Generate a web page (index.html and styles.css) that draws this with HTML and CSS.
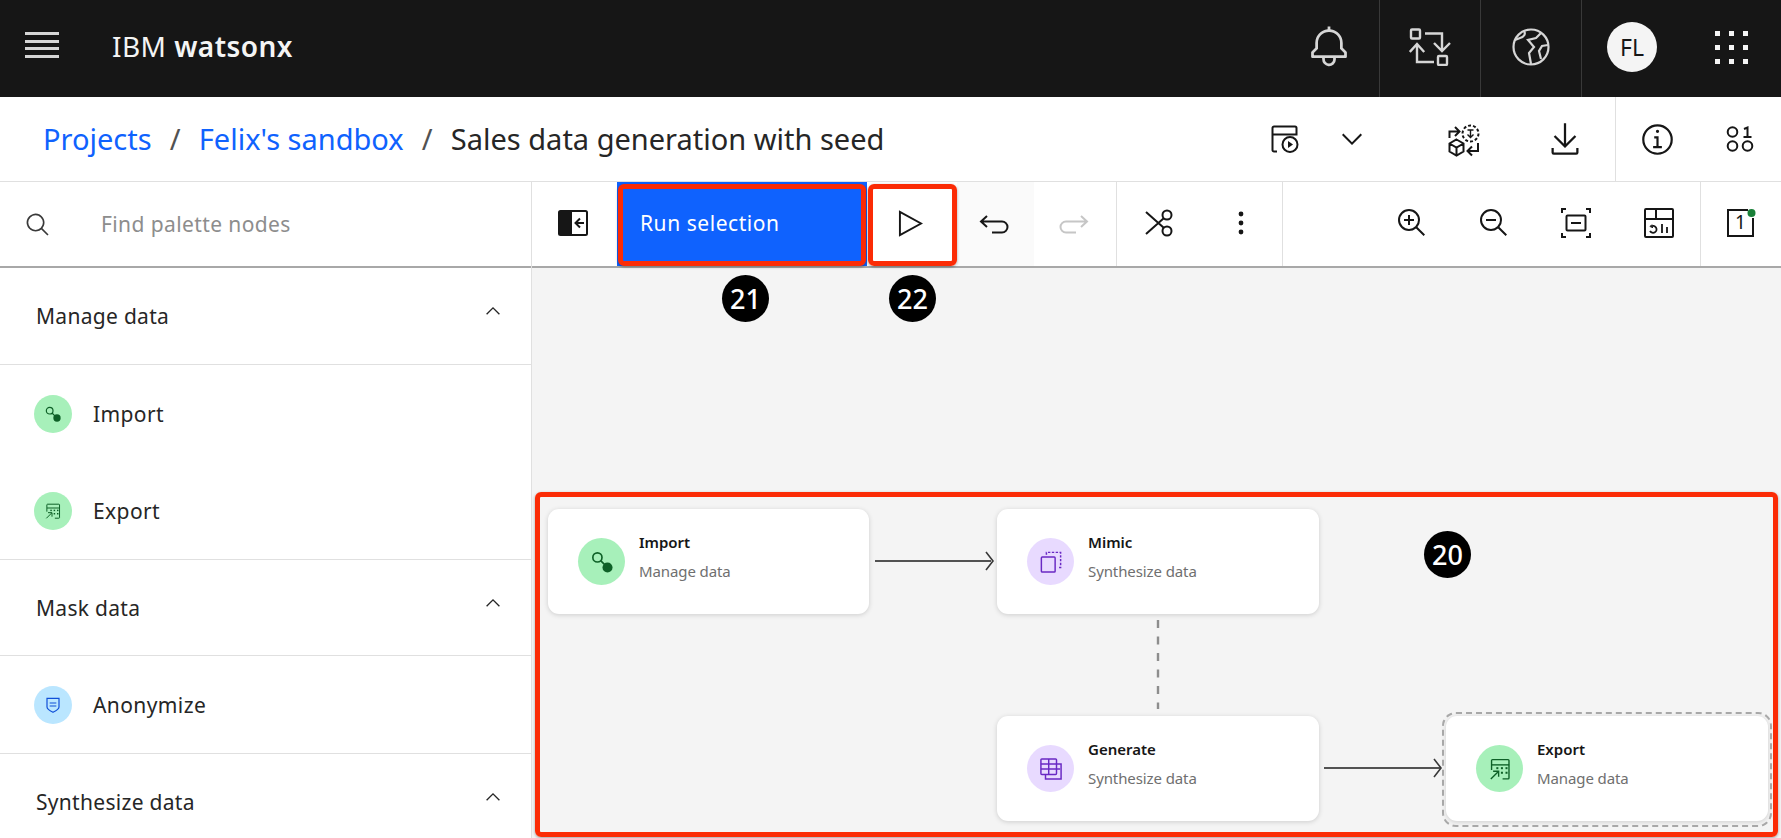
FILE: index.html
```html
<!DOCTYPE html>
<html lang="en">
<head>
<meta charset="utf-8">
<title>IBM watsonx</title>
<link rel="stylesheet" href="styles.css">
</head>
<body>
<svg class="defs" width="0" height="0" aria-hidden="true">
  <symbol id="n-import" viewBox="0 0 24 24"><circle cx="7" cy="7" r="5" fill="none" stroke="currentColor" stroke-width="1.8"/><path d="M10.5 10.5l5 5" fill="none" stroke="currentColor" stroke-width="1.8"/><circle cx="18" cy="18" r="5.5" fill="currentColor"/></symbol>
  <symbol id="n-export" viewBox="0 0 24 24"><g fill="none" stroke="currentColor" stroke-width="1.5"><path d="M2.8 13V2.8a1 1 0 0 1 1-1h17a1 1 0 0 1 1 1v19a1 1 0 0 1-1 1h-6"/><path d="M3 7.5h19"/><path d="M2 23l8-8M4.5 14.5H10.5V20.5"/></g><g fill="currentColor"><rect x="8" y="10" width="2.2" height="2.2"/><rect x="13" y="10" width="2.2" height="2.2"/><rect x="18" y="10" width="2.2" height="2.2"/><rect x="13" y="15" width="2.2" height="2.2"/><rect x="18" y="15" width="2.2" height="2.2"/></g></symbol>
  <symbol id="n-mimic" viewBox="0 0 24 24"><g fill="none" stroke="currentColor" stroke-width="1.6"><rect x="1.5" y="6.500" width="15" height="16.500" rx="1"/><path d="M7 4V1.500h15.500v16.500h-3" stroke-dasharray="2.6 1.6"/></g></symbol>
  <symbol id="n-generate" viewBox="0 0 24 24"><g fill="none" stroke="currentColor" stroke-width="1.6"><rect x="1" y="1" width="17" height="17" rx="1"/><path d="M1 6.5h17M1 12h21M9.5 1v17"/><path d="M18 6.5h5v16.5H6v-5"/></g></symbol>
  <symbol id="n-anon" viewBox="0 0 24 24"><path d="M3 2h18v13c0 3-5 6-9 8-4-2-9-5-9-8z" fill="none" stroke="currentColor" stroke-width="1.8"/><path d="M7 9h10M7 13.500h10" stroke="currentColor" stroke-width="1.8"/></symbol>
</svg>

<div class="app">
  <header class="topbar">
    <button class="hamburger" aria-label="Menu"><span></span><span></span><span></span><span></span></button>
    <div class="brand">IBM <b>watsonx</b></div>
    <div class="top-actions">
      <div class="top-cell">
        <svg width="44" height="44" viewBox="0 0 32 32" fill="currentColor"><path d="M28.7071,19.293,26,16.5859V13a10.0136,10.0136,0,0,0-9-9.9492V1H15V3.0508A10.0136,10.0136,0,0,0,6,13v3.5859L3.2929,19.293A1,1,0,0,0,3,20v3a1,1,0,0,0,1,1h7v.7768a5.152,5.152,0,0,0,4.5,5.1987A5.0057,5.0057,0,0,0,21,25V24h7a1,1,0,0,0,1-1V20A1,1,0,0,0,28.7071,19.293ZM19,25a3,3,0,0,1-6,0V24h6Zm8-3H5V20.4141L7.707,17.707A1,1,0,0,0,8,17V13a8,8,0,0,1,16,0v4a1,1,0,0,0,.293.707L27,20.4141Z"/></svg>
      </div>
      <div class="top-cell sep">
        <svg width="42" height="38" viewBox="0 0 42 38" fill="none" stroke="currentColor" stroke-width="2.4"><rect x="2" y="1.500" width="9" height="9" rx="1"/><path d="M16 5.500H33V23M25 15l8 8 8-8"/><path d="M8 16V34H25M.8 24L8 16l7.200 8"/><rect x="29" y="28" width="9" height="9" rx="1"/></svg>
      </div>
      <div class="top-cell sep">
        <svg width="38" height="38" viewBox="0 0 38 38" fill="none" stroke="currentColor" stroke-width="2.200"><circle cx="19" cy="19" r="17.500"/><path d="M12 3c2 3 0 6-4 7l-5 2"/><path d="M29 5l-5 5-8 2 6 7-5 6 2 11"/><path d="M36 17l-6 1-3 5 2 8"/></svg>
      </div>
      <div class="top-cell sep avatar-cell"><div class="avatar">FL</div></div>
      <div class="top-cell grid-cell">
        <div class="grid-icon"><i></i><i></i><i></i><i></i><i></i><i></i><i></i><i></i><i></i></div>
      </div>
    </div>
  </header>

  <div class="subbar">
    <nav class="crumbs">
      <a class="crumb-link">Projects</a><span class="slash">/</span><a class="crumb-link">Felix's sandbox</a><span class="slash">/</span><span class="crumb-cur">Sales data generation with seed</span>
    </nav>
    <div class="sub-actions">
      <div class="sub-btn w66">
        <svg width="28" height="28" viewBox="0 0 28 28" fill="none" stroke="currentColor" stroke-width="2"><path d="M6 26.500H3a1.500 1.500 0 0 1-1.500-1.500V3A1.500 1.500 0 0 1 3 1.500h21A1.500 1.500 0 0 1 25.500 3v6.500H1.500"/><circle cx="19" cy="19.500" r="7.500"/><path d="M17 16v7l5-3.500z" fill="currentColor" stroke="none"/></svg>
      </div>
      <div class="sub-btn w67">
        <svg width="32" height="32" viewBox="0 0 32 32" fill="currentColor"><path d="M16 22 6 12 7.400 10.600 16 19.200 24.600 10.600 26 12z"/></svg>
      </div>
      <div class="sub-btn w101 ml28 nudge-down">
        <svg width="34" height="34" viewBox="0 0 34 34" fill="none" stroke="currentColor" stroke-width="2"><path d="M2.500 14V7.500H12M8 3l4.500 4.500L8 12"/><circle cx="23.500" cy="9.500" r="8" stroke-dasharray="3 2"/><path d="M23.500 6v7M20.500 10.500l3 3 3-3M20.500 6h6" stroke-width="1.400"/><path d="M9.500 15.500l7 4v8l-7 4-7-4v-8zM2.500 19.500l7 4 7-4M9.500 23.500v8"/><path d="M31 19v8H20.500M25 22.500L20.500 27l4.500 4.500"/></svg>
      </div>
      <div class="sub-btn w101">
        <svg width="36" height="36" viewBox="0 0 32 32" fill="currentColor"><path d="M26 24v4H6v-4H4v4a2 2 0 002 2h20a2 2 0 002-2v-4zM26 14l-1.410-1.410L17 20.170V2h-2v18.170l-7.590-7.580L6 14l10 10 10-10z"/></svg>
      </div>
      <div class="sub-btn w84 border-l">
        <svg width="35" height="35" viewBox="0 0 32 32" fill="currentColor"><path d="M17 22v-9h-4v2h2v7h-3v2h8v-2h-3zM16 7a1.500 1.500 0 101.500 1.500A1.500 1.500 0 0016 7z"/><path d="M16 30a14 14 0 1114-14A14 14 0 0116 30zm0-26a12 12 0 1012 12A12 12 0 0016 4z"/></svg>
      </div>
      <div class="sub-btn w82">
        <svg width="28" height="26" viewBox="0 0 28 26" fill="none" stroke="currentColor" stroke-width="2"><circle cx="6.500" cy="6" r="4.800"/><circle cx="6.500" cy="20" r="4.800"/><circle cx="21.500" cy="20" r="4.800"/><path d="M18 3l3.500-1.500V11M17.500 11h8"/></svg>
      </div>
    </div>
  </div>

  <div class="main">
    <aside class="palette">
      <div class="search">
        <svg class="search-ic" width="26" height="26" viewBox="0 0 32 32" fill="currentColor"><path d="M29,27.5859l-7.5521-7.5521a11.0177,11.0177,0,1,0-1.4141,1.4141L27.5859,29ZM4,13a9,9,0,1,1,9,9A9.01,9.01,0,0,1,4,13Z"/></svg>
        <span class="search-text">Find palette nodes</span>
      </div>
      <div class="cat cat-first"><span>Manage data</span><svg width="22" height="22" viewBox="0 0 32 32" fill="currentColor"><path d="M16 10 26 20 24.600 21.400 16 12.800 7.400 21.400 6 20z"/></svg></div>
      <div class="items">
        <div class="item"><span class="dot green"><svg width="16" height="16"><use href="#n-import"/></svg></span>Import</div>
        <div class="item"><span class="dot green"><svg width="16" height="16"><use href="#n-export"/></svg></span>Export</div>
      </div>
      <div class="cat"><span>Mask data</span><svg width="22" height="22" viewBox="0 0 32 32" fill="currentColor"><path d="M16 10 26 20 24.600 21.400 16 12.800 7.400 21.400 6 20z"/></svg></div>
      <div class="items">
        <div class="item"><span class="dot blue"><svg width="16" height="16"><use href="#n-anon"/></svg></span>Anonymize</div>
      </div>
      <div class="cat"><span>Synthesize data</span><svg width="22" height="22" viewBox="0 0 32 32" fill="currentColor"><path d="M16 10 26 20 24.600 21.400 16 12.800 7.400 21.400 6 20z"/></svg></div>
    </aside>

    <section class="work">
      <div class="toolbar">
        <div class="tool w85 pr4">
          <svg width="30" height="26" viewBox="0 0 30 26"><rect x="1" y="1" width="28" height="24" rx="1.500" fill="none" stroke="currentColor" stroke-width="2"/><rect x="1" y="1" width="13" height="24" fill="currentColor"/><path d="M26 13H18M22 8.500L17.500 13l4.500 4.500" fill="none" stroke="currentColor" stroke-width="2"/></svg>
        </div>
        <button class="run-btn">Run selection</button>
        <div class="tool w90 pr4">
          <svg width="25" height="27" viewBox="0 0 26 28" fill="none" stroke="currentColor" stroke-width="2"><path d="M2 2v24l22-12z"/></svg>
        </div>
        <div class="tool w77 soft pr4">
          <svg class="nudge-icon" width="30" height="19" viewBox="0 0 30 19" fill="none" stroke="currentColor" stroke-width="2"><path d="M8 1L2 6.500 8 12M2 6.500H23a5.500 5.500 0 0 1 0 11H13"/></svg>
        </div>
        <div class="tool w83 border-r disabled pr2">
          <svg class="nudge-icon" width="30" height="19" viewBox="0 0 30 19" fill="none" stroke="currentColor" stroke-width="2"><path d="M22 1l6 5.500L22 12M28 6.500H7a5.500 5.500 0 0 0 0 11H17"/></svg>
        </div>
        <div class="tool w83">
          <svg width="28" height="28" viewBox="0 0 28 28" fill="none" stroke="currentColor" stroke-width="2"><circle cx="22" cy="6" r="4.500"/><circle cx="22" cy="22" r="4.500"/><path d="M1 3l18 16M1 25l18-16"/></svg>
        </div>
        <div class="tool w83 border-r">
          <svg width="6" height="24" viewBox="0 0 6 24" fill="currentColor"><circle cx="3" cy="3" r="2.400"/><circle cx="3" cy="12" r="2.400"/><circle cx="3" cy="21" r="2.400"/></svg>
        </div>
        <div class="tool-spacer"></div>
        <div class="tool w82">
          <svg width="32" height="32" viewBox="0 0 32 32" fill="currentColor"><path d="M18 12h-4V8h-2v4H8v2h4v4h2v-4h4v-2z"/><path d="M21.448 20A10.856 10.856 0 0024 13a11 11 0 10-11 11 10.856 10.856 0 007-2.552L27.586 29 29 27.586zM13 22a9 9 0 119-9 9.010 9.010 0 01-9 9z"/></svg>
        </div>
        <div class="tool w82">
          <svg width="32" height="32" viewBox="0 0 32 32" fill="currentColor"><path d="M8 12h10v2H8z"/><path d="M21.448 20A10.856 10.856 0 0024 13a11 11 0 10-11 11 10.856 10.856 0 007-2.552L27.586 29 29 27.586zM13 22a9 9 0 119-9 9.010 9.010 0 01-9 9z"/></svg>
        </div>
        <div class="tool w82">
          <svg width="30" height="30" viewBox="0 0 30 30" fill="none" stroke="currentColor" stroke-width="2"><path d="M1 5V1h4M25 1h4v4M29 25v4h-4M5 29H1v-4"/><rect x="5.500" y="7.500" width="19" height="15" rx="1"/><path d="M10 15h10"/></svg>
        </div>
        <div class="tool w84 border-r">
          <svg width="30" height="30" viewBox="0 0 30 30" fill="none" stroke="currentColor" stroke-width="2"><rect x="1" y="1" width="28" height="28" rx="1"/><path d="M1 11h28M12 1v10"/><path d="M7 18.500a3.500 3.500 0 1 1 -1 4.500" stroke-width="1.800"/><path d="M8 16.500l-2 2 3 1.200" stroke-width="1"/><path d="M18 16v9M23 19v6" stroke-width="1.800"/></svg>
        </div>
        <div class="tool w80">
          <span class="count-ic">
            <svg width="30" height="30" viewBox="0 0 30 30" fill="none" stroke="currentColor" stroke-width="2"><path d="M22 2H2v26h25V10"/><text x="14.500" y="21" class="count-digit">1</text><circle cx="25.500" cy="5" r="4" fill="#198038" stroke="none"/></svg>
          </span>
        </div>
      </div>

      <div class="canvas">
        <svg class="links" width="1249" height="570" viewBox="0 0 1249 570" fill="none">
          <path d="M343 293H459" stroke="#525252" stroke-width="1.800"/>
          <path d="M454 284l7 9-7 9" stroke="#393939" stroke-width="1.600"/>
          <path d="M626 352V441" stroke="#8d8d8d" stroke-width="2.400" stroke-dasharray="8 8.500"/>
          <path d="M792 500H909" stroke="#525252" stroke-width="1.800"/>
          <path d="M902 491l7 9-7 9" stroke="#393939" stroke-width="1.600"/>
        </svg>

        <div class="node node-import">
          <span class="node-dot green"><svg width="22" height="22"><use href="#n-import"/></svg></span>
          <div class="node-text"><div class="node-title">Import</div><div class="node-sub">Manage data</div></div>
        </div>
        <div class="node node-mimic">
          <span class="node-dot purple"><svg width="22" height="22"><use href="#n-mimic"/></svg></span>
          <div class="node-text"><div class="node-title">Mimic</div><div class="node-sub">Synthesize data</div></div>
        </div>
        <div class="node node-generate">
          <span class="node-dot purple"><svg width="22" height="22"><use href="#n-generate"/></svg></span>
          <div class="node-text"><div class="node-title">Generate</div><div class="node-sub">Synthesize data</div></div>
        </div>
        <div class="node node-export">
          <span class="node-dot green"><svg width="22" height="22"><use href="#n-export"/></svg></span>
          <div class="node-text"><div class="node-title">Export</div><div class="node-sub">Manage data</div></div>
        </div>
        <div class="selected-outline"></div>
      </div>
    </section>
  </div>

  <div class="mark mark-21"></div>
  <div class="mark mark-22"></div>
  <div class="mark mark-20"></div>
  <div class="badge badge-21">21</div>
  <div class="badge badge-22">22</div>
  <div class="badge badge-20">20</div>
</div>
</body>
</html>
```

FILE: styles.css
```css
* { box-sizing: border-box; }
html, body { margin: 0; padding: 0; }
body {
  width: 1781px;
  height: 838px;
  overflow: hidden;
  background: #fff;
  color: #161616;
  font-family: "Noto Sans", "Liberation Sans", sans-serif;
}
.defs { position: absolute; }
.app { position: relative; width: 1781px; height: 838px; overflow: hidden; }
svg { display: block; flex: none; }

/* top bar */
.topbar {
  height: 97px;
  background: #161616;
  color: #f4f4f4;
  display: flex;
  align-items: center;
}
.hamburger {
  margin: 0 0 7px 25px;
  width: 34px;
  height: 26px;
  padding: 0;
  background: none;
  border: 0;
  display: flex;
  flex-direction: column;
  justify-content: space-between;
}
.hamburger span { display: block; height: 3px; background: #d6d6d6; }
.brand { margin: 0 0 6px 53px; font-size: 28px; letter-spacing: .45px; white-space: nowrap; }
.brand b { font-weight: 600; }
.top-actions { margin-left: auto; display: flex; height: 97px; color: #d6d6d6; }
.top-cell { width: 101px; height: 97px; padding-bottom: 3px; display: flex; align-items: center; justify-content: center; }
.top-cell.sep { border-left: 1px solid #393939; }
.grid-cell { width: 99px; }
.avatar {
  width: 50px; height: 50px; border-radius: 50%;
  background: #f4f4f4; color: #161616;
  display: flex; align-items: center; justify-content: center;
  font-size: 23px;
}
.grid-icon { display: grid; grid-template-columns: repeat(3, 5px); grid-auto-rows: 5px; gap: 9px 9px; }
.grid-icon i { display: block; background: #f4f4f4; }

/* breadcrumb bar */
.subbar {
  height: 85px;
  display: flex;
  align-items: stretch;
  border-bottom: 1px solid #e0e0e0;
  background: #fff;
}
.crumbs { padding-left: 43px; display: flex; align-items: center; font-size: 29px; white-space: nowrap; padding-bottom: 2px; }
.crumb-link { color: #0f62fe; }
.slash { margin: 0 18.2px; color: #525252; }
.crumb-cur { color: #262626; }
.sub-actions { margin-left: auto; display: flex; align-items: stretch; color: #161616; }
.sub-btn { display: flex; align-items: center; justify-content: center; }
.w66 { width: 66px; } .w67 { width: 67px; } .w101 { width: 101px; } .w84 { width: 84px; } .w82 { width: 82px; }
.ml28 { margin-left: 28px; }
.nudge-down { padding-top: 4px; }
.border-l { border-left: 1px solid #e0e0e0; }

/* main */
.main { display: flex; height: 656px; }
.palette { width: 532px; flex: none; border-right: 1px solid #e0e0e0; }
.search {
  height: 86px;
  border-bottom: 2px solid #a8a8a8;
  display: flex;
  align-items: center;
  padding-left: 25px;
  color: #393939;
}
.search-text { margin-left: 50px; font-size: 21px; letter-spacing: .4px; color: #8d8d8d; }
.search-ic { margin-top: 2px; }
.cat {
  height: 96px;
  border-bottom: 1px solid #e0e0e0;
  display: flex;
  align-items: center;
  justify-content: space-between;
  padding: 0 27px 0 36px;
  font-size: 21px;
  letter-spacing: .3px;
  color: #262626;
}
.cat svg { margin-top: -10px; }
.cat-first { height: 97px; }
.item {
  height: 97px;
  display: flex;
  align-items: center;
  padding-left: 34px;
  font-size: 21px;
  letter-spacing: .4px;
  color: #262626;
}
.items { border-bottom: 1px solid #e0e0e0; }
.dot {
  width: 38px; height: 38px; border-radius: 50%;
  display: flex; align-items: center; justify-content: center;
  margin-right: 21px; flex: none;
}
.green { background: #a7f0ba; color: #0e6027; }
.blue { background: #bae6ff; color: #0f4fd8; }
.purple { background: #e8daff; color: #6929c4; }

/* toolbar */
.work { flex: 1; display: flex; flex-direction: column; min-width: 0; }
.toolbar { height: 86px; flex: none; display: flex; border-bottom: 2px solid #a8a8a8; color: #161616; }
.tool { display: flex; align-items: center; justify-content: center; flex: none; padding-bottom: 2px; }
.pr4 { padding-right: 4px; }
.pr2 { padding-right: 2px; }
.nudge-icon { margin-top: 2px; }
.w85 { width: 85px; } .w90 { width: 90px; } .w77 { width: 77px; } .w83 { width: 83px; } .w80 { width: 80px; }
.soft { background: #fafafa; }
.disabled { color: #c6c6c6; }
.border-r { border-right: 1px solid #e0e0e0; }
.tool-spacer { flex: 1; }
.run-btn {
  width: 250px; flex: none;
  background: #0f62fe; color: #fff;
  border: 0;
  font: inherit; font-size: 21px;
  letter-spacing: .55px;
  text-align: left;
  padding: 0 0 2px 23px;
}
.count-digit { fill: #161616; stroke: none; font-size: 19px; text-anchor: middle; font-family: "Noto Sans", sans-serif; }

/* canvas */
.canvas { position: relative; flex: 1; background: #f4f4f4; }
.links { position: absolute; left: 0; top: 0; }
.node {
  position: absolute;
  width: 322px;
  height: 105px;
  background: #fff;
  border-radius: 11px;
  box-shadow: 0 1px 5px rgba(0,0,0,.16);
  display: flex;
  align-items: center;
  padding-left: 30px;
}
.node-import { left: 16px; top: 241px; width: 321px; }
.node-mimic { left: 465px; top: 241px; }
.node-generate { left: 465px; top: 448px; }
.node-export { left: 914px; top: 448px; }
.node-dot { width: 47px; height: 47px; border-radius: 50%; flex: none; display: flex; align-items: center; justify-content: center; margin-right: 14px; }
.node-text { margin-top: -11px; }
.node-title { font-size: 15px; font-weight: 600; color: #161616; line-height: 20px; }
.node-sub { font-size: 15px; letter-spacing: -.1px; color: #6f6f6f; line-height: 20px; margin-top: 9px; }
.selected-outline {
  position: absolute;
  left: 910px; top: 444px;
  width: 330px; height: 115px;
  border: 2px dashed #a8a8a8;
  border-radius: 14px;
}

/* annotations */
.mark { position: absolute; border: 5px solid #fb2b05; border-radius: 6px; box-shadow: 0 1px 3px rgba(0,0,0,.35); }
.mark-21 { left: 618px; top: 184px; width: 248px; height: 82px; }
.mark-22 { left: 868px; top: 184px; width: 89px; height: 82px; }
.mark-20 { left: 535px; top: 492px; width: 1243px; height: 345px; }
.badge {
  position: absolute;
  width: 47px; height: 47px; border-radius: 50%;
  background: #000; color: #fff;
  display: flex; align-items: center; justify-content: center;
  font-size: 27px; font-weight: 500;
}
.badge-21 { left: 722px; top: 275px; }
.badge-22 { left: 889px; top: 275px; }
.badge-20 { left: 1424px; top: 531px; }
```
